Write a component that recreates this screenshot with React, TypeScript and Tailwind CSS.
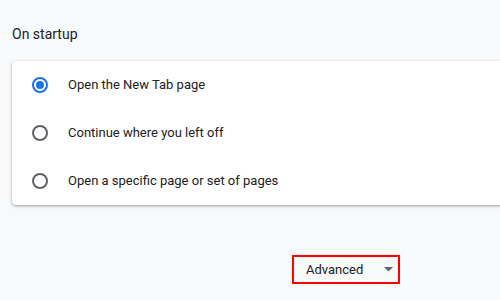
import React from "react";

function Radio({ checked }: { checked?: boolean }) {
  return checked ? (
    <div className="w-4 h-4 rounded-full border-2 border-[#1a73e8] flex items-center justify-center shrink-0">
      <div className="w-2 h-2 rounded-full bg-[#1a73e8]" />
    </div>
  ) : (
    <div className="w-4 h-4 rounded-full border-2 border-[#5f6368] shrink-0" />
  );
}

const rows = [
  { label: "Open the New Tab page", checked: true },
  { label: "Continue where you left off" },
  { label: "Open a specific page or set of pages" },
];

export default function App() {
  return (
    <div
      className="w-[500px] h-[300px] overflow-hidden bg-[#f8f9fa] text-[#202124]"
      style={{ fontFamily: "Roboto, 'Liberation Sans', sans-serif" }}
    >
      <div className="pt-[24px] pl-[12px] text-[14px] leading-[20px] h-[44px]">On startup</div>
      <div className="mt-[17px] ml-[12px] w-[680px] bg-white rounded-[4px] shadow-[0_1px_2px_0_rgba(60,64,67,0.3),0_1px_3px_1px_rgba(60,64,67,0.15)]">
        {rows.map((r) => (
          <div key={r.label} className="h-[48px] flex items-center pl-[20px] gap-[20px] text-[13px]">
            <Radio checked={r.checked} />
            <span>{r.label}</span>
          </div>
        ))}
      </div>
      <div className="mt-[50px] ml-[292px] w-[108px] h-[29px] border-2 border-[#ff0000] flex items-center pl-[12px] text-[13px] text-[#202124]">
        <span>Advanced</span>
        <svg className="ml-auto mr-[5px]" width="9" height="5" viewBox="0 0 9 5">
          <path d="M0 0 L9 0 L4.5 4.5 Z" fill="#5f6368" />
        </svg>
      </div>
    </div>
  );
}
